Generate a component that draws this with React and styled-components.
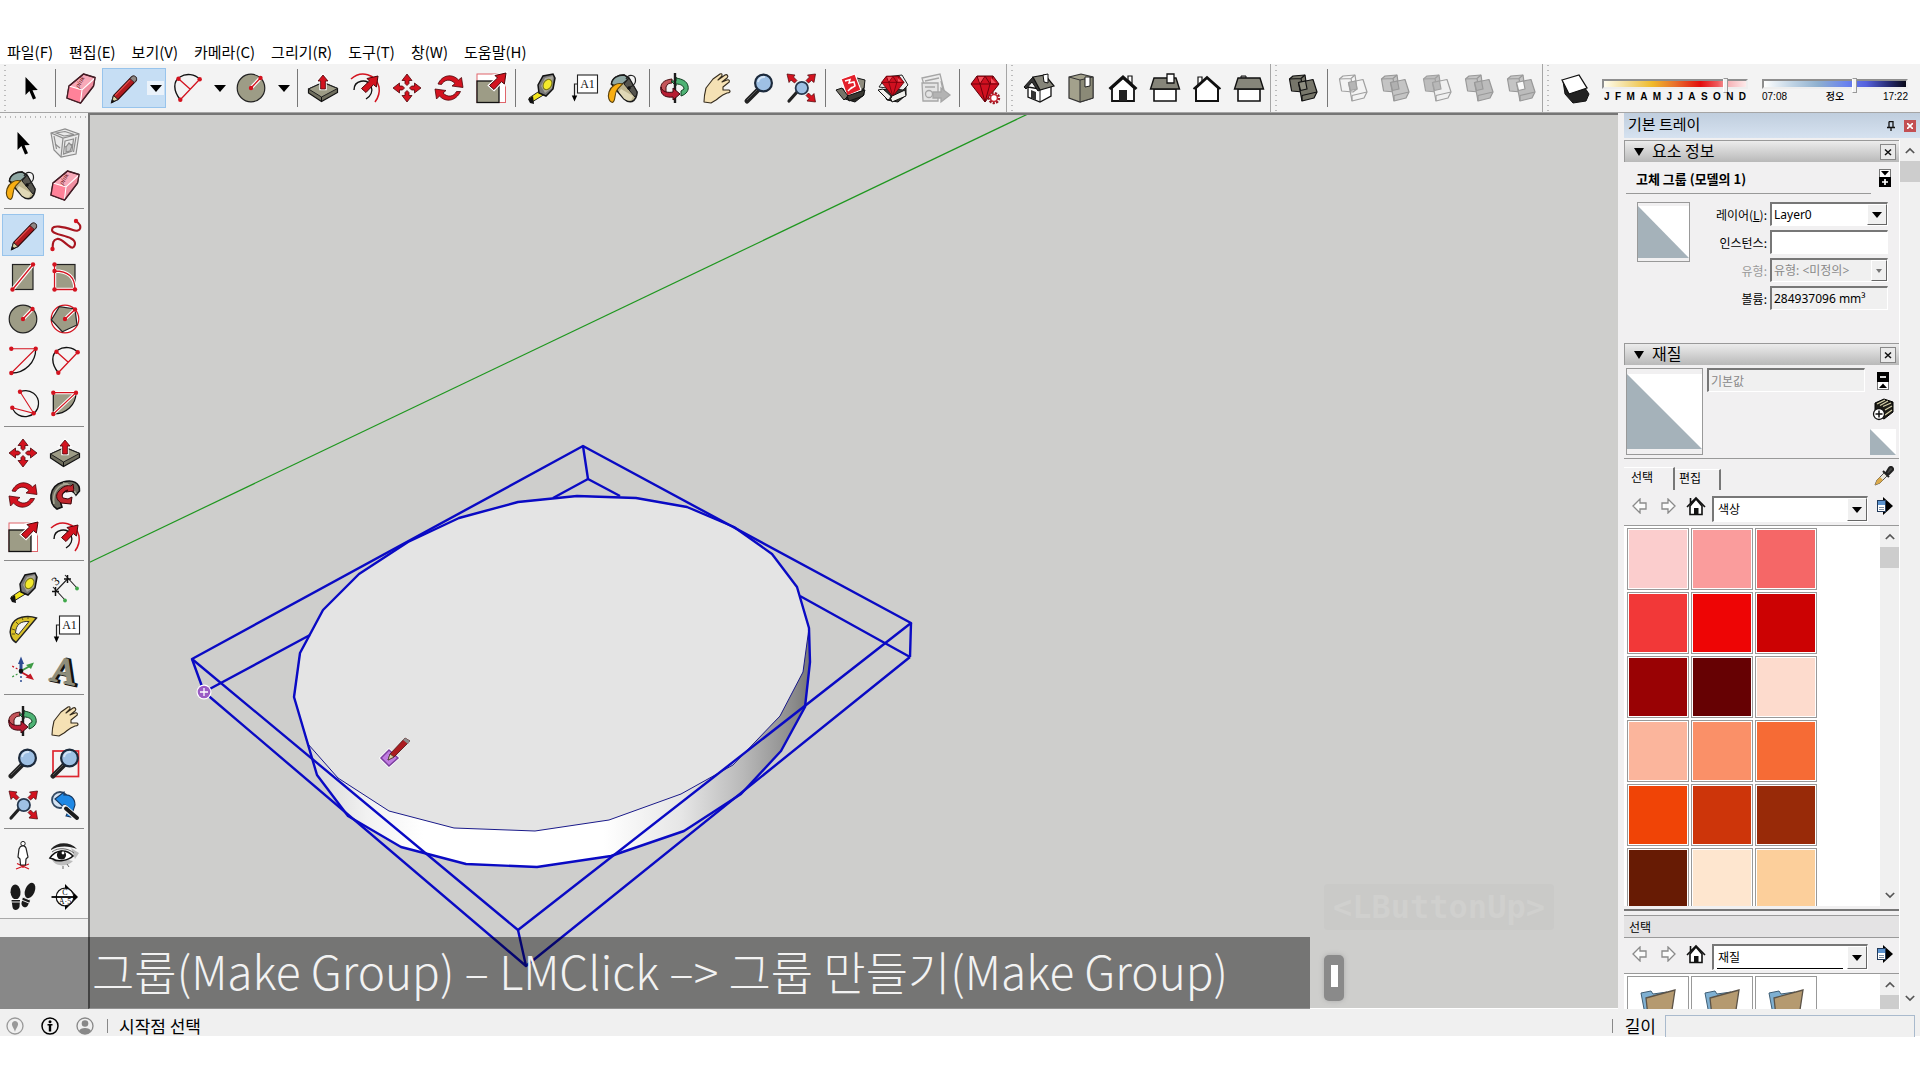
import React, { useState } from 'react';
import styled, { createGlobalStyle, css } from 'styled-components';

const RED = '#d3131f';
const OLIVE = '#9d9c86';
const NAVY = '#0a0ac4';

const dot = (x, y) => <circle key={`${x}-${y}`} cx={x} cy={y} r="2.2" fill={RED} />;

const arrowUp = 'M16 1 L21 7 H18.4 V15 H13.6 V7 H11 Z';
const arrowDiag = 'M30 1 L28.4 12 L25.5 9.6 L18 17.5 L13.5 13.5 L21.5 6 L19 3.5 Z';

const lens = (
  <>
    <path d="M15 18 L4 29" stroke="#222" strokeWidth="5" strokeLinecap="round" />
    <path d="M14 18 L4 28" stroke="#555" strokeWidth="1" />
    <circle cx="20.5" cy="11" r="8.4" fill="#9ec0e4" stroke="#1c2a3c" strokeWidth="2.2" />
    <path d="M15 10 a6 6 0 0 1 7 -5" fill="none" stroke="#d3e4f6" strokeWidth="2" />
  </>
);

const solidShape = (back, front, mid, line) => (
  <g stroke={line} strokeWidth="1.2" strokeLinejoin="round">
    <path d="M2.5 7 L6 4 L18 3 L20 17 L16 20 L4.6 19 Z" fill={back} />
    <path d="M2.5 7 L14 6.5 L18 3 M14 6.5 L15 12" fill="none" />
    <path d="M11.5 10.5 L26 7.5 L30 20 L27 26 L15 29 Z" fill={front} />
    <path d="M15 23.5 L30 20 M15 23.5 L15 29" fill="none" />
    <path d="M11.5 10.5 L18.5 9 L20 17 L13.5 18.5 Z" fill={mid} />
  </g>
);

const house = (
  <>
    <path d="M21 4 h4 v8 l-4 -4 Z" fill="#fff" stroke="#111" strokeWidth="1.2" />
    <path d="M5 16 V29 H27 V16 L16 6 Z" fill="#fff" stroke="#111" strokeWidth="1.8" />
    <path d="M2.5 17 L16 5 L29.5 17" fill="none" stroke="#111" strokeWidth="3" />
  </>
);

const sideHouse = (
  <>
    <path d="M5 17 H27 V29 H5 Z" fill="#fff" stroke="#111" strokeWidth="1.6" />
    <path d="M5 6 H27 L30.5 17 H1.5 Z" fill="#86857a" stroke="#111" strokeWidth="1.4" />
  </>
);

const gem = (
  <>
    <path d="M8 4 H24 L30 12 L16 30 L2 12 Z" fill="#d01020" stroke="#5a0008" strokeWidth="1" />
    <path d="M8 4 L11 12 L16 4 L21 12 L24 4 M2 12 H30 M11 12 L16 30 L21 12" fill="none" stroke="#6e000a" strokeWidth="1" />
    <path d="M9 5 L15 5 L11 11 Z M22 6 L27 11 H22 Z" fill="#f4505a" />
  </>
);

const ICONS = {
  select: <path d="M10.5 5 V23 L14.4 19 L18 27.5 L21 26.2 L17.5 18.2 L22.8 18 Z" fill="#000" />,
  component: (
    <g fill="none" stroke="#8d8d8d" strokeWidth="1.2">
      <path d="M2 6 L16 2 L30 7 L27 27 L12 30 L5 23 Z" fill="#e9e9e9" />
      <path d="M2 6 L14 11 L30 7 M14 11 L12 30 M5 9 L7.5 22 M27 10 L24.5 25 M7 6 L16 4.5 L25 7.5 L15 9 Z" />
      <path d="M16 14 L24.500 12 L23 24 L14.500 27 Z M6 17 L11 21 M16 20 L24 17" />
      <path d="M17 20 L20 16 L23 19 L21 24 L17 25 Z" fill="#c9c9c9" />
    </g>
  ),
  paint: (
    <>
      <path d="M2.5 12 C3 6 9 3 15 3 L20 6 L28 20 C28 25 26 28 23 29.500 C20 30 17 29 15 27 L9 20 Z" fill="#bdb48f" stroke="#1b1b1b" strokeWidth="1.6" />
      <path d="M15 12 L20 6 L28 20 C28 22 27 24 26 25 Z" fill="#55544e" stroke="#1b1b1b" />
      <path d="M12 17 L24 24 L22 28.500 C19 29 17 28 15 26.500 L10 20 Z" fill="#e0d8b6" />
      <path d="M2.5 12 C3 6 9 3 15 3 L19.5 6 C17 10 12 13 7 14.500 Z" fill="#8fa8a4" stroke="#1b1b1b" strokeWidth="1.4" />
      <path d="M17 7 C20 1 27 3 26.500 9 C26.500 12 23 15 20.500 15" fill="none" stroke="#222" strokeWidth="1.2" />
      <circle cx="20" cy="16" r="1.8" fill="#111" />
      <path d="M13.5 12 C8 10 2 14 0 20 C-1.5 25 0 30 3.500 30.500 C7 29 5 22 8 18 C9.500 15.500 12 14 13.5 12 Z" fill="#f8ae12" stroke="#5a420d" strokeWidth="1.1" />
    </>
  ),
  eraser: (
    <>
      <path d="M18.5 2 L30 5.5 L28.5 14 L15.5 31 L2 26 L4 14 Z" fill="#f8a9b8" stroke="#431c25" strokeWidth="1.4" strokeLinejoin="round" />
      <path d="M4 14 L17 18 L15.5 31 L2 26 Z" fill="#ff8299" />
      <path d="M17 18 L30 5.5 L28.5 14 L15.5 31 Z" fill="#ef8ea0" />
      <path d="M4 14 L17 18 L30 6 M17 18 L15.5 30" fill="none" stroke="#fff" strokeWidth="1.1" />
      <path d="M18.5 2 L30 5.5 L28.5 14 L15.5 31 L2 26 L4 14 Z" fill="none" stroke="#431c25" strokeWidth="1.3" strokeLinejoin="round" />
      <text x="12" y="15" fontSize="7" fontStyle="italic" fontFamily="Liberation Serif, serif" fill="#611" transform="rotate(-60 14 14)">pink</text>
    </>
  ),
  pencil: (
    <>
      <path d="M4.5 30.5 L6.5 23.5 L24.5 5 C27 2.5 31 6 29 9 L11 27.5 Z" fill="#b01a1f" stroke="#2b0708" strokeWidth="1.1" />
      <path d="M4.5 30.5 L6.5 23.5 L11 27.5 Z" fill="#d9cf9f" stroke="#222" />
      <path d="M8 23.5 L23 8" stroke="#e24a48" strokeWidth="1.2" />
      <path d="M23 6.5 L27.5 10.5 L29.5 8 C30 4.5 27 3 25 4.6 Z" fill="#8f8784" stroke="#333" strokeWidth=".8" />
      <path d="M4 31.5 L5.5 27.5 L8 29.5 Z" fill="#111" />
    </>
  ),
  freehand: (
    <>
      <path d="M27 2 C34 7 32 14 24 11 C15 8 3 5 3 11 C3 17 27 16 26 25 C24 36 14 18 8 20 C3 21 4 26 3.5 30" fill="none" stroke="#a81620" strokeWidth="2.1" />
      {dot(27, 2)}
      {dot(3.5, 30)}
    </>
  ),
  rect: (
    <>
      <rect x="5.5" y="3.5" width="20.5" height="25" fill={OLIVE} stroke="#222" strokeWidth="1.2" />
      <path d="M5.5 28.5 L26 3.5" stroke="#fff" strokeWidth="3.6" />
      <path d="M5.5 28.5 L26 3.5" stroke={RED} strokeWidth="1.3" />
      {dot(5.5, 28.5)}
      {dot(26, 3.5)}
    </>
  ),
  rotRect: (
    <>
      <rect x="5.5" y="3.5" width="20.5" height="25" fill={OLIVE} stroke="#222" strokeWidth="1.2" />
      <path d="M5.5 3.5 V28.5 H26 C26 16 19 10 5.5 10" fill="none" stroke="#fff" strokeWidth="3.4" />
      <path d="M5.5 3.5 V28.5 H26 C26 16 19 10 5.5 10" fill="none" stroke={RED} strokeWidth="1.3" />
      {[[5.5, 3.5], [5.5, 10], [5.5, 28.5], [26, 28.5]].map(([x, y]) => dot(x, y))}
    </>
  ),
  circle: (
    <>
      <circle cx="16" cy="16" r="13.8" fill={OLIVE} stroke="#222" strokeWidth="1.2" />
      <path d="M16 16 L25.5 6" stroke="#fff" strokeWidth="3.8" />
      <path d="M16 16 L25.5 6" stroke={RED} strokeWidth="1.4" />
      {dot(16, 16)}
      {dot(25.5, 6)}
    </>
  ),
  polygon: (
    <>
      <circle cx="16" cy="16" r="13.8" fill="#fff" stroke={RED} strokeWidth="1.2" />
      <path d="M10.3 3.7 L26 6 L28 22 L13.3 28.7 L2.4 17 Z" fill={OLIVE} stroke="#222" strokeWidth="1.2" />
      <path d="M16 16 L26 6.5" stroke="#fff" strokeWidth="3.6" />
      <path d="M16 16 L26 6.5" stroke={RED} strokeWidth="1.4" />
      {dot(16, 16)}
      {dot(26, 6.5)}
    </>
  ),
  arc: (
    <>
      <path d="M28.7 3.7 A24 24 0 0 1 4.3 28" fill="none" stroke="#111" strokeWidth="1.3" />
      <path d="M4.3 3.7 H28.7 L4.3 28" fill="none" stroke={RED} strokeWidth="1.1" />
      {[[4.3, 3.7], [28.7, 3.7], [4.3, 28]].map(([x, y]) => dot(x, y))}
    </>
  ),
  arc2: (
    <>
      <path d="M9.3 27.7 C2 19 2 9 9 5 C15 1 24 2 28.7 7.3" fill="none" stroke="#111" strokeWidth="1.4" />
      <path d="M7.5 6.7 L19 17 M28.7 7.3 L9.3 27.7" stroke={RED} strokeWidth="1.3" />
      {[[7.5, 6.7], [28.7, 7.3], [9.3, 27.7]].map(([x, y]) => dot(x, y))}
    </>
  ),
  arc3: (
    <>
      <path d="M13 4.7 C24 .5 32 9 31.5 17 C31 31 11 35 5.3 20.7" fill="none" stroke="#111" strokeWidth="1.2" />
      <path d="M13 4.7 L26.7 26.3 L5.3 20.7" fill="none" stroke={RED} strokeWidth="1.1" />
      {[[13, 4.7], [26.7, 26.3], [5.3, 20.7]].map(([x, y]) => dot(x, y))}
    </>
  ),
  pie: (
    <>
      <path d="M4.3 5.7 H27 C27 18 17 27 4.3 27 Z" fill={OLIVE} stroke="#111" strokeWidth="1.2" />
      <path d="M4.3 5.7 H27 L4.3 27" fill="none" stroke="#fff" strokeWidth="3.2" />
      <path d="M4.3 5.7 H27 L4.3 27" fill="none" stroke={RED} strokeWidth="1.2" />
      {[[4.3, 5.7], [27, 5.7], [4.3, 27]].map(([x, y]) => dot(x, y))}
    </>
  ),
  move: (
    <g fill={RED} stroke="#4b0509" strokeWidth=".8">
      {[0, 90, 180, 270].map((a) => (
        <path key={a} transform={`rotate(${a} 16 16)`} d="M16 2 L21 8.5 H18 V11.5 L16 13.5 L14 11.5 V8.5 H11 Z" />
      ))}
    </g>
  ),
  push: (
    <>
      <path d="M1.5 17 L16 10.5 L30.5 16.5 V20.5 L14.5 29.5 L1.5 21 Z" fill="#6f6e5e" stroke="#111" strokeWidth="1.2" />
      <path d="M1.5 17 L16 10.5 L30.5 16.5 L14.5 25 Z" fill={OLIVE} stroke="#222" strokeWidth="1" />
      <path d="M14.5 25 V29" stroke="#111" />
      <path d={arrowUp} transform="translate(0 2)" fill={RED} stroke="#fff" strokeWidth="2.6" />
      <path d={arrowUp} transform="translate(0 2)" fill={RED} stroke="#4b0509" strokeWidth=".8" />
    </>
  ),
  rotate: (
    <g fill={RED} stroke="#4b0509" strokeWidth=".8">
      <path d="M5 12 C9 3 19 1 25.5 8 L28.5 5.5 L30 15.5 L19 14 L22 11.5 C17 6 11 8 8.5 12.5 Z" />
      <path d="M27.5 19.5 C23 29 13 31 6.5 24 L3.5 27 L2 17 L13 18.5 L10 21 C15 26 21 24.5 23.5 19.5 Z" />
    </g>
  ),
  follow: (
    <>
      <path d="M8 30 C-1 25 -1 7 14 3 C24 0 31 4 30.5 12 L27 16 C25 12 20 9 14 14 C11 18 11 24 13 28 Z" fill="#6b6a5e" stroke="#111" strokeWidth="1.6" />
      <path d="M5 25 C3 14 9 5 19 5 M14 4 C20 5 25 9 27 15" fill="none" stroke="#a9a894" strokeWidth="1.6" />
      <path d="M10 12 C14 7 19 6 22 7 L24 5 L25 12 L17 13 L19 11 C14 12 12 16 14 19 L19 20 L23 18 L22 25 L12 24 C6 20 7 15 10 12 Z" fill="#c0262c" stroke="#3d0407" strokeWidth="1" />
    </>
  ),
  scale: (
    <>
      <rect x="2" y="2" width="28.5" height="28.5" fill="#fff" stroke="#e0656b" />
      <rect x="2" y="9" width="22" height="21.5" fill={OLIVE} stroke="#111" strokeWidth="1.3" />
      <path d={arrowDiag} transform="translate(1 0)" fill={RED} stroke="#fff" strokeWidth="3" />
      <path d={arrowDiag} transform="translate(1 0)" fill={RED} stroke="#4b0509" />
    </>
  ),
  offset: (
    <>
      <path d="M2 7 C12 -2 27 2 30 15 C31 21 29 26 26 30" fill="none" stroke={RED} strokeWidth="1.5" />
      <path d="M5 18 C5 8 18 6 22 14 C24 19 22 24 17 27" fill="none" stroke="#111" strokeWidth="1.4" />
      <path d={arrowDiag} transform="translate(-1 3)" fill={RED} stroke="#4b0509" />
    </>
  ),
  tape: (
    <>
      <path d="M4 26 L16 18 L20 22 L7 30 Z" fill="#f2e51c" stroke="#222" />
      <path d="M3 27 L8 24 L9 32 L5 31 Z" fill="#111" />
      <path d="M13 13 L18 4 L28 2 L30 6 L28 17 L21 24 L14 21 Z" fill="#777" stroke="#111" strokeWidth="1.5" />
      <path d="M16 14 L20 6 L28 4 L27 16 L20 21 Z" fill="#aaa79b" />
      <ellipse cx="22.5" cy="12.5" rx="4" ry="5.5" transform="rotate(30 22.5 12.5)" fill="#f4ea2c" stroke="#777413" />
    </>
  ),
  dimension: (
    <>
      <path d="M6.5 20.5 L18.5 8 M4 16 L16 29 M16 4 L28 17" stroke="#222" strokeWidth="1.1" />
      <path d="M3 20.5 H10 M6.5 16 V25 M15 8 H22 M18.5 4 V12" stroke="#111" strokeWidth="1.5" />
      <text x="4" y="13" fontSize="12" fontFamily="Liberation Serif, serif" transform="rotate(-42 8 10)">3</text>
      <circle cx="16" cy="29.5" r="1.9" fill="#3fa84a" />
      <circle cx="28" cy="17.5" r="1.9" fill="#3fa84a" />
    </>
  ),
  protractor: (
    <>
      <path d="M29.5 5 C21 2 7 3 4 14 C2 20 4 27 9 29.5 Z" fill="#d9c128" stroke="#222" strokeWidth="1.4" />
      <path d="M22 8.5 C14 8 9 11 8.5 20 L11.5 21.5 Z" fill="#f4f4f4" stroke="#333" strokeWidth="1" />
      <path d="M5 16 l3 1 M5 21 l3 0 M9 9 l2 2 M15 5 l1 2 M21 4 l0 2" stroke="#5f5512" />
    </>
  ),
  text: (
    <>
      <rect x="10.5" y="3" width="20" height="18" fill="#fff" stroke="#222" strokeWidth="1.1" />
      <text x="20.5" y="16" fontSize="12" textAnchor="middle" fontFamily="Liberation Serif, serif" fill="#111">A1</text>
      <path d="M10 12 H7.5 V25" fill="none" stroke="#222" strokeWidth="1.2" />
      <path d="M4.8 23.5 H10.2 L7.5 29.5 Z" fill="#000" />
    </>
  ),
  axes: (
    <>
      <path d="M14 16 V7" stroke="#2d4c93" strokeWidth="3" />
      <path d="M14 1.5 L17 9 H11 Z" fill="#2d4c93" />
      <path d="M14 16 L23 11" stroke="#3e9b45" strokeWidth="2" />
      <path d="M27 7.5 L24 14 L19 10 Z" fill="#3e9b45" />
      <path d="M14 17 L23 22" stroke="#c31824" strokeWidth="2" />
      <path d="M27 25 L18.5 22.5 L23.5 18.5 Z" fill="#c31824" />
      <path d="M14 17 V27" stroke="#2d4c93" strokeWidth="1.5" strokeDasharray="2 2" />
      <path d="M14 17 L5 22" stroke="#3e9b45" strokeWidth="1.2" strokeDasharray="2 2" />
      <path d="M14 16 L5 11" stroke="#c31824" strokeWidth="1.2" strokeDasharray="2 2" />
      <circle cx="14" cy="16" r="2.3" fill="#111" />
    </>
  ),
  text3d: (
    <g fontFamily="Liberation Serif, serif" fontSize="36" stroke="#111" textAnchor="middle" transform="rotate(12 16 16)">
      <text x="17" y="28" fill="#3c3b34" strokeWidth="3">A</text>
      <text x="15" y="28" fill="#8e8d7b" stroke="#8e8d7b" strokeWidth="1.5">A</text>
    </g>
  ),
  orbit: (
    <>
      <path d="M13 7 C4 8 1 12 2 18 L7 21 V15 C8 12 10 11 13 11 Z" fill="#c4555a" stroke="#4b1014" strokeWidth="1" />
      <path d="M17 5 V9 L12 9 L17 14 V12 C22 12 25 14 25 17 L22 19 V24 C28 22 30 18 29 14 C28 9 23 7 17 6 Z" fill="#4eb274" stroke="#123f22" strokeWidth="1" />
      <path d="M16 1 V31" stroke="#1c1c1c" strokeWidth="2.4" />
      <path d="M2 15 C3 20 9 21 14 20 V16 L21 22 L14 28 V25 C7 26 2 23 2 18 Z" fill="#b81d33" stroke="#3d0810" strokeWidth="1" />
    </>
  ),
  pan: (
    <path d="M3 30 C3 24 4 20 5 16 L12 7 L19 2 C21 1 22 3 20 5 L17 8 L24 3 C26 2 28 4 26 6 L21 10 L26 8 C29 7 29 10 27 11 L22 15 L22 18 L28 18 C30 19 29 21 26 21 C20 23 18 26 15 28 L10 31 Z" fill="#f5e1b4" stroke="#332a1c" strokeWidth="1.1" strokeLinejoin="round" />
  ),
  zoom: lens,
  zoomWindow: (
    <>
      <rect x="4" y="4" width="25.5" height="25.5" fill="none" stroke="#dd2730" strokeWidth="1.7" />
      {lens}
    </>
  ),
  extents: (
    <>
      <path d="M12 20 L4 29" stroke="#222" strokeWidth="3.2" strokeLinecap="round" />
      <circle cx="16.8" cy="16" r="6.2" fill="#9ec0e4" stroke="#26384e" strokeWidth="1.8" />
      <g fill={RED} stroke="#4b0509" strokeWidth=".7">
        <path d="M2 2 L10 3 L8.5 5 L12 8.5 L9.5 11 L6 8 L4 10.5 Z" />
        <path d="M30.5 2 L29 10.5 L26.5 8.5 L23.5 11 L21 8.5 L24.5 5 L22.5 3 Z" />
        <path d="M30.5 30 L22 29 L24 26.5 L21 23.5 L23.5 21 L26.5 24 L29 21.5 Z" />
      </g>
    </>
  ),
  previous: (
    <>
      <circle cx="11" cy="11" r="8" fill="#d4e3f3" stroke="#344a63" strokeWidth="1.8" />
      <path d="M6 10 L15 3 V6 C21 5 26 9 26 16 L22 28 L17 27 C20 23 20 17 15 15.500 V18.500 Z" fill="#1e88e5" stroke="#17375f" strokeWidth="1.1" />
      <path d="M16 19 L28 29" stroke="#f3f3f3" strokeWidth="6" strokeLinecap="round" />
      <path d="M17 19.500 L28 29" stroke="#1b1b1b" strokeWidth="4" strokeLinecap="round" />
    </>
  ),
  person: (
    <>
      <path d="M9 30 L22 25 M10 24.5 L22 30 M16 22 V29" stroke={RED} strokeWidth="1.2" />
      <circle cx="16" cy="4.6" r="2.2" fill="#fff" stroke="#222" />
      <path d="M13.5 7.5 C16 6 18 7 19 9 L21 18 L19 20 L18.5 26 H13.5 L13 20 L11 18 L12 10 Z" fill="#fff" stroke="#222" strokeWidth="1.2" />
    </>
  ),
  eye: (
    <>
      <path d="M3 21 C8 29 20 27 24 22 L15 20 Z M22 9 L30 14 L26 20 Z" fill="#bdbdbd" />
      <path d="M2 10 C8 3 20 2 28 10 C20 6.500 9 6.500 2 11 Z" fill="#222" />
      <path d="M1 19 C7 10 18 10 24 17 C19 22 8 23 4 20 Z" fill="#fff" stroke="#111" strokeWidth="1.6" />
      <circle cx="12.5" cy="16" r="4.6" fill="#151515" />
      <circle cx="14" cy="14" r="1.4" fill="#fff" />
      <path d="M3 13 C9 8 19 9 25 14 M14 27 l0 3 M18 25 l2 3" fill="none" stroke="#666" />
    </>
  ),
  walk: (
    <g fill="#1a1a1a">
      <ellipse cx="8.5" cy="11" rx="5" ry="7.5" transform="rotate(-4 8.5 11)" />
      <path d="M4.5 19 L13 19 L12.5 26 C11 30 6 30 5.5 26 Z" />
      <ellipse cx="23" cy="9.5" rx="4.8" ry="8" transform="rotate(22 23 9.5)" />
      <path d="M16 16 L23.5 19 L20.5 25 C18 28 14 25 14.5 22 Z" />
      <path d="M4 18.5 H13.5 M4.5 21 H13 M15.5 16 L24 19.5 M14.5 19 L22 22" stroke="#fff" strokeWidth=".9" />
    </g>
  ),
  section: (
    <>
      <path d="M16 3 L29 16 L16 29 Z" fill="#000" />
      <circle cx="16" cy="16" r="8.8" fill="#fff" stroke="#111" strokeWidth="1.2" />
      <path d="M2.5 16 H28" stroke="#000" strokeWidth="1.8" />
      <g fontFamily="Liberation Serif, serif" fontSize="8" textAnchor="middle">
        <text x="16" y="14">C</text>
        <text x="16" y="23">A·5</text>
      </g>
    </>
  ),
  warehouse: (
    <>
      <path d="M5 17 L10 27 L20 30 L29 23 V13 L20 17 Z" fill="#282824" stroke="#111" />
      <path d="M22 6 L30 8 L29 16 L26 18 Z" fill="#8f8c7e" stroke="#111" />
      <path d="M6 7 L20 2 L26 18 L12 24 Z" fill="#e3202b" stroke="#fff" strokeWidth="1.2" />
      <path d="M10 9 L15 7.500 L14 11 L19 10 L20 14 L15 17 M13 19 L17 15" fill="none" stroke="#fff" strokeWidth="1.5" />
      <path d="M1 18 L7 16 L13 24 L9 28 Z" fill="#77756a" stroke="#111" />
      <path d="M12 24 L30 18 L28 24 L14 29 Z" fill="#3b3a34" stroke="#111" />
    </>
  ),
  extension: (
    <>
      <path d="M4 18 L10 28 L21 30 L29 23 V14 Z" fill="#3a3935" stroke="#111" />
      <path d="M2 15 L9 5 L25 3 L31 13 L26 18 Z" fill="#eee" stroke="#222" />
      <g transform="translate(3 1) scale(.8 .78)">{gem}</g>
      <path d="M1 18 L6 17 L15 25 L11 28 Z M13 25 L28 18 L29 24 L15 30 Z" fill="#f1f1ee" stroke="#111" />
    </>
  ),
  layout: (
    <g stroke="#a6a6a6" strokeWidth="1.3">
      <path d="M3 6 L21 2 L26 22 L9 27 Z" fill="#ececec" />
      <path d="M3 11 H19 V29 H4 Z" fill="#e4e4e4" />
      <path d="M6 15 H16 M6 9 L20 6 M22 9 L24 18" />
      <circle cx="10" cy="22" r="3.5" fill="none" />
      <path d="M14 20 H22 V16 L31 23 L22 30 V26 H14 Z" fill="#b3b3b3" />
    </g>
  ),
  ruby: (
    <>
      {gem}
      <circle cx="25" cy="26" r="5" fill="#fff" stroke="#9c1520" strokeWidth="2.4" strokeDasharray="2.2 1.2" />
      <circle cx="25" cy="26" r="3.5" fill="none" stroke="#c72532" strokeWidth="1.6" />
    </>
  ),
  iso: (
    <>
      <path d="M5 15 V25 L17 30 L28 24 V13 L17 17 Z" fill="#fff" stroke="#111" strokeWidth="1.3" />
      <path d="M17 17 V30" stroke="#111" />
      <path d="M8 18 L13 20 V28 L8 26 Z" fill="#333" />
      <path d="M1 15 L10 5 L17 18 L15 19 L9 10 L3 17 Z" fill="#333" stroke="#111" />
      <path d="M10 5 L22 3 L31 14 L17 18 Z" fill="#86857a" stroke="#111" strokeWidth="1.2" />
      <path d="M20 3 L25 2 V11 L21 10 Z" fill="#fff" stroke="#111" />
    </>
  ),
  top: (
    <>
      <path d="M4 5 L16 2 L28 5 V26 L15 30 L4 26 Z" fill="#a3a18c" stroke="#333" strokeWidth="1.2" />
      <path d="M15 8 V30 L28 26 V5 Z" fill="#8b8a77" stroke="#333" />
      <path d="M4 5 L15 8" stroke="#333" />
      <path d="M20 5 H25 V14 L20 15 Z" fill="#fff" stroke="#222" />
    </>
  ),
  front: (
    <>
      {house}
      <path d="M12 18 H20 V29 H12 Z" fill="#222" />
    </>
  ),
  right: (
    <>
      {sideHouse}
      <path d="M18 2 H25 V11 H18 Z" fill="#fff" stroke="#111" strokeWidth="1.3" />
    </>
  ),
  back: (
    <>
      <path d="M7 5 h4 v8 h-4 Z" fill="#fff" stroke="#111" strokeWidth="1.2" />
      <path d="M5 16 V29 H27 V16 L16 6 Z" fill="#fff" stroke="#111" strokeWidth="2" />
      <path d="M2.5 17 L16 5 L29.5 17" fill="none" stroke="#111" strokeWidth="2" />
    </>
  ),
  left: (
    <>
      <path d="M8 4 H13 V7 H8 Z" fill="#aaa" stroke="#111" />
      {sideHouse}
    </>
  ),
  shell: solidShape('#77766a', '#77766a', '#8f8e80', '#111'),
  intersect: solidShape('none', 'none', '#b5b5b5', '#a0a0a0'),
  union: solidShape('#c4c4c4', '#c4c4c4', '#b0b0b0', '#989898'),
  subtract: solidShape('#bdbdbd', '#f0f0f0', '#b8b8b8', '#a0a0a0'),
  trim: solidShape('#c4c4c4', '#bcbcbc', '#b3b3b3', '#999'),
  split: solidShape('#c4c4c4', '#bcbcbc', '#fafafa', '#999'),
  shadow: (
    <>
      <path d="M4 9 L6 22 L14 31 L27 29 L30 22 L26 16 Z" fill="#222" stroke="#111" />
      <path d="M3 8 L20 3 L28 16 L10 22 Z" fill="#fff" stroke="#111" strokeWidth="1.3" />
    </>
  ),
};

const MENUS = ['파일(F)', '편집(E)', '보기(V)', '카메라(C)', '그리기(R)', '도구(T)', '창(W)', '도움말(H)'];

const TOOLBAR = [
  'grip', 'select', '|', 'eraser', 'pencil+', 'arc2+', 'circle+', '|',
  'push', 'offset', 'move', 'rotate', 'scale', '|', 'tape', 'text', 'paint', '|',
  'orbit', 'pan', 'zoom', 'extents', '|', 'warehouse', 'extension', 'layout', '|', 'ruby',
  'grip', 'iso', 'top', 'front', 'right', 'back', 'left',
  'grip', 'shell', '|', 'intersect', 'union', 'subtract', 'trim', 'split',
  'grip', 'shadow',
];

const PALETTE = [
  ['select', 'component', 'paint', 'eraser'],
  ['pencil', 'freehand', 'rect', 'rotRect', 'circle', 'polygon', 'arc', 'arc2', 'arc3', 'pie'],
  ['move', 'push', 'rotate', 'follow', 'scale', 'offset'],
  ['tape', 'dimension', 'protractor', 'text', 'axes', 'text3d'],
  ['orbit', 'pan', 'zoom', 'zoomWindow', 'extents', 'previous'],
  ['person', 'eye', 'walk', 'section'],
];

const SWATCHES = [
  '#fbcdcd', '#fa9c9c', '#f56767', '#f23838', '#ee0505', '#cc0203',
  '#990204', '#660103', '#fddbcd', '#fbb59c', '#fa9068', '#f66b35',
  '#f04406', '#cd350a', '#982a08', '#671b04', '#fee6cf', '#fccf9b',
];

const Icon = ({ name }) => (
  <IconSvg viewBox="0 0 32 32" aria-hidden="true">{ICONS[name]}</IconSvg>
);

const Toolbar = () => (
  <ToolbarRow>
    {TOOLBAR.map((item, i) => {
      if (item === 'grip') return <Grip key={i} $first={i === 0} />;
      if (item === '|') return <Divider key={i} />;
      if (item.endsWith('+')) {
        const name = item.slice(0, -1);
        return (
          <Split key={i} $active={name === 'pencil'}>
            <ToolButton aria-label={name}><Icon name={name} /></ToolButton>
            <MoreButton aria-label={`${name} options`} $active={name === 'pencil'}><Triangle $size={6} /></MoreButton>
          </Split>
        );
      }
      return <ToolButton key={i} aria-label={item}><Icon name={item} /></ToolButton>;
    })}
    <SliderBlock>
      <Range
        type="range"
        aria-label="date"
        defaultValue="87"
        $track="linear-gradient(90deg, #fffdf0, #f2d98a 18%, #efba2a 34%, #e8702c 50%, #e30d0d 68%, #ee5a5c 80%, #f6b5b9 88%, #fdeaea)"
      />
      <SliderLabels>{'JFMAMJJASOND'.split('').map((m, i) => <span key={i}>{m}</span>)}</SliderLabels>
    </SliderBlock>
    <SliderBlock>
      <Range
        type="range"
        aria-label="time"
        defaultValue="64"
        $track="linear-gradient(90deg, #fff, #bfd3e4 20%, #8fb0cf 38%, #6a83ee 58%, #5561dd 72%, #262a70 88%, #0a0a18)"
      />
      <SliderLabels $plain><span>07:08</span><span>정오</span><span>17:22</span></SliderLabels>
    </SliderBlock>
  </ToolbarRow>
);

const Palette = () => (
  <Side>
    <PaletteBox>
      <SideGrip />
      {PALETTE.map((group, i) => (
        <PaletteGroup key={i}>
          {group.map((name) => (
            <PaletteButton key={name} aria-label={name} $active={name === 'pencil'}>
              <Icon name={name} />
            </PaletteButton>
          ))}
        </PaletteGroup>
      ))}
    </PaletteBox>
  </Side>
);

const TOP_FACE = '577,496 636,498 687,507 734,527 772,554 797,587 809,628 803,672 780,716 733,765 681,794 609,820 535,831 454,828 389,811 338,778 308,744 294,697 300,653 323,610 359,574 408,542 459,518 518,502';
const BODY = '577,496 636,498 687,507 734,527 772,554 797,587 809,628 810,662 805,707 781,751 741,794 684,831 611,856 537,867 466,864 401,847 348,816 317,775 294,697 300,653 323,610 359,574 408,542 459,518 518,502';

const Scene = () => (
  <SceneSvg viewBox="90 115 1528 894" preserveAspectRatio="xMinYMin slice" aria-hidden="true">
    <defs>
      <linearGradient id="side" gradientUnits="userSpaceOnUse" x1="294" y1="0" x2="810" y2="0">
        <stop offset="0" stopColor="#cfcfcf" />
        <stop offset=".14" stopColor="#f1f1f1" />
        <stop offset=".25" stopColor="#fff" />
        <stop offset=".6" stopColor="#fff" />
        <stop offset=".75" stopColor="#e6e6e6" />
        <stop offset=".87" stopColor="#b9b9b9" />
        <stop offset=".97" stopColor="#8a8a8a" />
        <stop offset="1" stopColor="#777" />
      </linearGradient>
    </defs>
    <path d="M88 563 L1030 113" stroke="#1f971f" strokeWidth="1.2" />
    <polygon points={BODY} fill="url(#side)" />
    <polygon points={TOP_FACE} fill="#e4e4e4" stroke="#1a1a8a" strokeWidth="1" />
    <g fill="none" stroke={NAVY} strokeWidth="2.4" strokeLinejoin="round">
      <polygon points={BODY} />
      <path d="M583 446 L911 623 L518 930 L192 659 Z" />
      <path d="M583 446 L588 479 M911 623 L910 657 M518 930 L526 966 M192 659 L204 692" />
      <path d="M204 692 L526 966 L910 657" />
      <path d="M553 498 L588 479 L620 496 M310 635 L204 692 M800 596 L910 657" />
    </g>
    <circle cx="204" cy="692" r="7.5" fill="#fff" />
    <circle cx="204" cy="692" r="6.3" fill="#9a5cc4" />
    <path d="M204 688 V696 M200 692 H208" stroke="#fff" strokeWidth="1.3" />
    <path d="M389 750 L398 758 L389 766 L381 758 Z" fill="#c07ce0" stroke="#fff" strokeWidth="3" />
    <path d="M389 750 L398 758 L389 766 L381 758 Z" fill="#c07ce0" stroke="#7b3f9e" strokeWidth="1.5" />
    <path d="M388 760 L390 754 L405 738 L410 741 L394 757 Z" fill="#ab1c20" stroke="#4a1212" strokeWidth=".8" />
    <path d="M388 760 L390 754 L394 757 Z" fill="#d9cf9f" stroke="#333" strokeWidth=".6" />
    <path d="M405 738 L410 741 L408 744 L403 740 Z" fill="#8d8d8d" />
  </SceneSvg>
);

const Chevron = ({ up }) => (
  <ChevronSvg viewBox="0 0 12 8" aria-hidden="true">
    <path d={up ? 'M1 7 L6 2 L11 7' : 'M1 1 L6 6 L11 1'} fill="none" stroke="#555" strokeWidth="2" />
  </ChevronSvg>
);

const ScrollBar = ({ width, down = true, thumb = 21 }) => (
  <ScrollTrack $width={width}>
    <ScrollArrow aria-label="up"><Chevron up /></ScrollArrow>
    <ScrollThumb $height={thumb} />
    <Spacer />
    {down && <ScrollArrow aria-label="down"><Chevron /></ScrollArrow>}
  </ScrollTrack>
);

const Header = ({ title }) => (
  <SectionHeader>
    <Triangle $size={5} $tall />
    <SectionTitle>{title}</SectionTitle>
    <CloseButton aria-label="close">
      <svg width="8" height="8" viewBox="0 0 8 8"><path d="M1 1.500 L7 7 M7 1.500 L1 7" stroke="#111" strokeWidth="1.5" /></svg>
    </CloseButton>
  </SectionHeader>
);

const Combo = ({ id, label, value, disabled, underline }) => (
  <ComboFrame $disabled={disabled}>
    <ComboSelect id={id} aria-label={label} disabled={disabled} $underline={underline}>
      <option>{value}</option>
    </ComboSelect>
    <ComboArrow $disabled={disabled}><Triangle $size={disabled ? 3 : 5} $color={disabled ? '#777' : '#000'} /></ComboArrow>
  </ComboFrame>
);

const Preview = ({ size }) => (
  <PreviewBox $size={size}>
    <svg width="100%" height="100%" viewBox="0 0 10 10" preserveAspectRatio="none">
      <rect width="10" height="10" fill="#fff" />
      <path d="M0 0 L10 10 H0 Z" fill="#a5b2ba" />
    </svg>
  </PreviewBox>
);

const NavRow = ({ label, value, underline }) => (
  <Nav>
    <NavButton aria-label="back">
      <svg width="16" height="16" viewBox="0 0 16 16"><path d="M1 8 L8 1 V5 H14 V11 H8 V15 Z" fill="#fbfbfb" stroke="#8a8a8a" strokeWidth="1.3" /></svg>
    </NavButton>
    <NavButton aria-label="forward">
      <svg width="16" height="16" viewBox="0 0 16 16"><path d="M15 8 L8 1 V5 H2 V11 H8 V15 Z" fill="#fbfbfb" stroke="#8a8a8a" strokeWidth="1.3" /></svg>
    </NavButton>
    <NavButton aria-label="home">
      <svg width="20" height="20" viewBox="0 0 20 20">
        <path d="M4 10 V18.5 H16 V10 L10 3 Z" fill="#fff" stroke="#111" strokeWidth="1.6" />
        <path d="M1 11 L10 2 L19 11 M4.500 7 V2" fill="none" stroke="#111" strokeWidth="1.6" />
        <path d="M8 12 H12.500 V19 H8 Z" fill="#111" />
      </svg>
    </NavButton>
    <Combo label={label} value={value} underline={underline} />
    <NavButton aria-label="details">
      <svg width="18" height="18" viewBox="0 0 18 18">
        <path d="M7 0 L17 9 L7 18 Z" fill="#000" />
        <rect x="1.500" y="3.500" width="8" height="11" fill="#fff" stroke="#223a5a" />
        <path d="M2 4 H9 V8 H2 Z" fill="#5b93cf" />
        <path d="M3 10.500 H8 M3 12.500 H8" stroke="#7d8fa5" />
      </svg>
    </NavButton>
  </Nav>
);

const Folder = () => (
  <svg width="38" height="36" viewBox="0 0 38 36" aria-hidden="true">
    <path d="M2 4 L12 2 L14 5 L28 3 L25 34 L8 36 Z" fill="#7fb0d2" stroke="#3f5e75" />
    <path d="M7 9 L36 1 L31 34 L10 36 Z" fill="#b59a70" stroke="#5c5347" strokeWidth="1.3" />
  </svg>
);

const EntityInfo = () => (
  <section>
    <Header title="요소 정보" />
    <EntityTitle>
      <b>고체 그룹 (모델의 1)</b>
      <StackIcon />
    </EntityTitle>
    <EntityBody>
      <Preview size="small" />
      <Fields>
        <FieldLabel htmlFor="layer">레이어(<u>L</u>):</FieldLabel>
        <Combo id="layer" value="Layer0" />
        <FieldLabel htmlFor="instance">인스턴스:</FieldLabel>
        <Field id="instance" />
        <FieldLabel htmlFor="kind" $disabled>유형:</FieldLabel>
        <Combo id="kind" value="유형: <미정의>" disabled />
        <FieldLabel htmlFor="volume">볼륨:</FieldLabel>
        <Field id="volume" readOnly value="284937096 mm³" />
      </Fields>
    </EntityBody>
  </section>
);

const StackIcon = ({ flip }) => (
  <StackSvg viewBox="0 0 12 18" aria-hidden="true">
    <g transform={flip ? 'rotate(180 6 9)' : undefined}>
      <rect x=".5" y=".5" width="11" height="17" fill="#fff" stroke="#777" />
      <path d="M2 2 H10 L6 6.500 Z" fill="#000" />
      <rect y="8" width="12" height="10" fill="#000" />
      <path d={flip ? 'M3 13 H9' : 'M3 13 H9 M6 10 V16'} stroke="#fff" strokeWidth="1.7" />
    </g>
  </StackSvg>
);

const Materials = () => {
  const [tab, setTab] = useState('선택');
  return (
    <MaterialSection>
      <Header title="재질" />
      <MaterialTop>
        <Preview size="large" />
        <Field aria-label="name" disabled value="기본값" readOnly />
        <MaterialTools>
          <StackIcon flip />
          <svg width="22" height="23" viewBox="0 0 22 23" aria-hidden="true">
            <path d="M3 5 L12 1 L21 4 V14 L12 21 L3 17 Z" fill="#1d1c17" stroke="#000" />
            <path d="M5 6 L13 2 M8 7.500 L16 3 M11 8.500 L19 5 M13 12 L20 8 M13 17 L20 12" stroke="#d6d0a8" strokeWidth="1.2" />
            <circle cx="7" cy="16" r="5.500" fill="#fff" stroke="#111" strokeWidth="1.3" />
            <path d="M3.500 16 H10.500 M7 12.500 V19.500" stroke="#111" strokeWidth="1.5" />
          </svg>
          <svg width="26" height="26" viewBox="0 0 26 26" aria-hidden="true">
            <rect width="26" height="26" fill="#fff" />
            <path d="M0 0 L26 26 H0 Z" fill="#a5b2ba" />
          </svg>
        </MaterialTools>
      </MaterialTop>
      <Tabs role="tablist">
        {['선택', '편집'].map((name) => (
          <Tab key={name} role="tab" aria-selected={tab === name} $active={tab === name} onClick={() => setTab(name)}>
            {name}
          </Tab>
        ))}
        <Spacer />
        <NavButton aria-label="sample">
          <svg width="20" height="20" viewBox="0 0 20 20">
            <path d="M1 19 L3 14 L11 6 L14 9 L6 17 Z" fill="#e9e6dc" stroke="#555" />
            <path d="M1 19 L3 14 L6 11 L9 14 L6 17 Z" fill="#dba94a" />
            <path d="M9 5 L15 11 M12 7 L15 2 C17 -1 21 3 18 5 L14 9 Z" fill="#444" stroke="#222" strokeWidth="2" />
          </svg>
        </NavButton>
      </Tabs>
      <NavRow label="collection" value="색상" />
      <ListArea $grow>
        <Cells>
          {SWATCHES.map((color) => <Swatch key={color} aria-label={color} $color={color} />)}
        </Cells>
        <ScrollBar width={20} />
      </ListArea>
      <Splitter />
      <StripLabel>선택</StripLabel>
      <NavRow label="library" value="재질" underline />
      <ListArea>
        <Cells>
          {[0, 1, 2].map((i) => <FolderCell key={i} aria-label="folder"><Folder /></FolderCell>)}
        </Cells>
        <ScrollBar width={20} down={false} />
      </ListArea>
    </MaterialSection>
  );
};

const Tray = () => (
  <TrayBox>
    <TrayTitle>
      <span>기본 트레이</span>
      <Spacer />
      <PinButton aria-label="pin">
        <svg width="8" height="10" viewBox="0 0 8 10"><path d="M2 .5 H6 V6 M2 .5 V6 M0 6.500 H8 M4 6 V10" fill="none" stroke="#111" strokeWidth="1.3" /></svg>
      </PinButton>
      <TrayClose aria-label="close">
        <svg width="6" height="6" viewBox="0 0 6 6"><path d="M0 0 L6 6 M6 0 L0 6" stroke="#fff" strokeWidth="1.6" /></svg>
      </TrayClose>
    </TrayTitle>
    <TrayContent>
      <TraySections>
        <EntityInfo />
        <Materials />
      </TraySections>
      <ScrollBar width={21} />
    </TrayContent>
  </TrayBox>
);

const StatusBar = () => (
  <Status>
    <StatusIcon viewBox="0 0 18 18">
      <circle cx="9" cy="9" r="8" fill="none" stroke="#999" strokeWidth="1.3" />
      <path d="M9 15 C8 11 5.500 9 6 6.500 C6.500 3 11.500 3 12 6.500 C12.500 9 10 11 9 15 Z" fill="#999" />
    </StatusIcon>
    <StatusIcon viewBox="0 0 18 18">
      <circle cx="9" cy="9" r="8" fill="none" stroke="#000" strokeWidth="1.5" />
      <circle cx="9" cy="4.800" r="1.500" />
      <path d="M6.500 7 H11.500 V8.500 H10.200 V14.500 H7.800 V8.500 H6.500 Z" />
    </StatusIcon>
    <StatusIcon viewBox="0 0 18 18">
      <circle cx="9" cy="9" r="8" fill="none" stroke="#888" strokeWidth="1.3" />
      <circle cx="9" cy="6.500" r="3.300" fill="#888" />
      <path d="M3 14 C4 10 14 10 15 14 C12 18 6 18 3 14 Z" fill="#888" />
    </StatusIcon>
    <StatusText>시작점 선택</StatusText>
    <Spacer />
    <Measure htmlFor="length">길이</Measure>
    <MeasureInput id="length" />
  </Status>
);

const App = () => (
  <>
    <GlobalStyle />
    <Page>
      <MenuBar>
        {MENUS.map((m) => <MenuItem key={m}>{m}</MenuItem>)}
      </MenuBar>
      <Toolbar />
      <Main>
        <Palette />
        <Viewport><Scene /></Viewport>
        <Tray />
        <Caption>그룹(Make Group) – LMClick –&gt; 그룹 만들기(Make Group)</Caption>
        <KeyHud>
          <GhostKey>&lt;LButtonUp&gt;</GhostKey>
          <MouseKey><MouseMark /></MouseKey>
        </KeyHud>
      </Main>
      <StatusBar />
    </Page>
  </>
);

const GlobalStyle = createGlobalStyle`
  * { box-sizing: border-box; }
  body {
    margin: 0;
    background: #fff;
    color: #000;
    font-family: "Noto Sans CJK KR", "Liberation Sans", sans-serif;
  }
  button, input, select { font-family: inherit; color: inherit; margin: 0; }
  button { padding: 0; border: 0; background: none; }
  svg { display: block; }
`;

const Page = styled.div`
  display: flex;
  flex-direction: column;
  height: 100vh;
  padding: 40px 0 44px;
  overflow: hidden;
`;

const MenuBar = styled.nav`
  display: flex;
  align-items: center;
  gap: 16px;
  height: 24px;
  flex: none;
  padding-left: 7px;
`;

const MenuItem = styled.button`
  font-size: 15px;
  line-height: 24px;
  white-space: nowrap;
`;

const ToolbarRow = styled.div`
  display: flex;
  align-items: center;
  height: 49px;
  flex: none;
  background: #f3f3f3;
  border-bottom: 1px solid #a5a5a5;
`;

const IconSvg = styled.svg`
  width: 32px;
  height: 32px;
  overflow: visible;
`;

const ToolButton = styled.button`
  display: flex;
  align-items: center;
  justify-content: center;
  width: 42px;
  height: 40px;
  flex: none;
`;

const activeTool = css`
  background: #c6def4;
  outline: 1px solid #98c4ec;
  outline-offset: -1px;
`;

const Split = styled.div`
  display: flex;
  align-items: center;
  width: 64px;
  flex: none;
  ${({ $active }) => $active && activeTool}
`;

const MoreButton = styled.button`
  display: flex;
  align-items: center;
  justify-content: center;
  width: 17px;
  height: 14px;
  margin-left: 3px;
  background: ${({ $active }) => ($active ? '#eaf2fa' : 'none')};
`;

const Triangle = styled.i`
  width: 0;
  height: 0;
  flex: none;
  border: ${({ $size }) => $size}px solid transparent;
  border-top: ${({ $size, $tall }) => $size + ($tall ? 3 : 1)}px solid ${({ $color }) => $color || '#000'};
  border-bottom: 0;
`;

const Divider = styled.div`
  width: 8px;
  height: 38px;
  flex: none;
  background: linear-gradient(#777, #777) 3px 0 / 1px 100% no-repeat;
`;

const Grip = styled.div`
  width: ${({ $first }) => ($first ? 10 : 12)}px;
  height: 48px;
  flex: none;
  border-left: ${({ $first }) => ($first ? 0 : '1px solid #a5a5a5')};
  background: radial-gradient(circle, #bbb 1px, transparent 1px) 3px 4px / 4px 5px repeat-y;
`;

const SliderBlock = styled.div`
  display: flex;
  flex-direction: column;
  flex: 0 1 146px;
  min-width: 0;
  margin: 4px 6px 0 6px;

  & + & { margin-left: 8px; }
`;

const Range = styled.input`
  appearance: none;
  width: 100%;
  height: 14px;
  margin: 0;
  background: none;

  &::-webkit-slider-runnable-track {
    height: 10px;
    border: 2px solid #8e8e8e;
    border-right-color: #eee;
    border-bottom-color: #eee;
    background: ${({ $track }) => $track};
  }

  &::-webkit-slider-thumb {
    appearance: none;
    width: 5px;
    height: 15px;
    margin-top: -3px;
    background: #f3f3f3;
    border: 1px solid #999;
    border-left-color: #fff;
  }
`;

const SliderLabels = styled.div`
  display: flex;
  justify-content: space-between;
  padding: 0 ${({ $plain }) => ($plain ? 0 : 2)}px;
  font: ${({ $plain }) => ($plain ? 500 : 700)} 10px/12px "Liberation Sans", "Noto Sans CJK KR", sans-serif;
`;

const Main = styled.main`
  position: relative;
  display: flex;
  flex: 1;
  min-height: 0;
`;

const Side = styled.aside`
  width: 88px;
  flex: none;
  background: #f0f0f0;
`;

const PaletteBox = styled.div`
  background: #f4f4f4;
  border-bottom: 1px solid #a9a9a9;
`;

const SideGrip = styled.div`
  height: 9px;
  background: radial-gradient(circle, #bbb 1px, transparent 1px) 3px 2px / 5px 4px repeat-x;
`;

const PaletteGroup = styled.div`
  display: grid;
  grid-template-columns: 42px 42px;
  padding-left: 2px;

  & + & {
    margin-top: 2px;
    padding-top: 6px;
    background: linear-gradient(#8a8a8a, #8a8a8a) 4px 0 / 80px 1px no-repeat;
  }
`;

const PaletteButton = styled.button`
  display: flex;
  align-items: center;
  justify-content: center;
  height: 42px;
  ${({ $active }) => $active && activeTool}
`;

const Viewport = styled.div`
  flex: 1;
  min-width: 0;
  overflow: hidden;
  background: #cececc;
  border-top: 2px solid #757575;
  border-left: 2px solid #757575;
  border-bottom: 1px solid #fff;
`;

const SceneSvg = styled.svg`
  width: 100%;
  height: 100%;
`;

const TrayBox = styled.aside`
  display: flex;
  flex-direction: column;
  width: 302px;
  flex: none;
  padding-left: 6px;
  background: #f1f0f1;
  font-size: 12px;
`;

const TrayTitle = styled.header`
  display: flex;
  align-items: center;
  height: 25px;
  flex: none;
  padding: 0 4px 0 4px;
  background: linear-gradient(#c0cede, #d6e2f0);
  font-size: 15px;
  line-height: 18px;

  span:first-child { padding-bottom: 3px; }
`;

const PinButton = styled.button`
  margin-right: 9px;
`;

const TrayClose = styled.button`
  display: flex;
  align-items: center;
  justify-content: center;
  width: 12px;
  height: 12px;
  background: #c34f52;
`;

const Spacer = styled.span`
  flex: 1;
`;

const TrayContent = styled.div`
  display: flex;
  flex: 1;
  min-height: 0;
  padding-top: 2px;
`;

const TraySections = styled.div`
  display: flex;
  flex-direction: column;
  flex: 1;
  min-width: 0;
`;

const SectionHeader = styled.header`
  display: flex;
  align-items: center;
  gap: 8px;
  height: 22px;
  flex: none;
  padding: 0 3px 0 9px;
  border-top: 1px solid #999;
  border-left: 1px solid #999;
  background: linear-gradient(#ececec, #b9b9b9);
`;

const SectionTitle = styled.h2`
  flex: 1;
  margin: 0;
  padding-bottom: 3px;
  font-size: 16px;
  line-height: 18px;
  font-weight: 400;
`;

const CloseButton = styled.button`
  display: flex;
  align-items: center;
  justify-content: center;
  width: 16px;
  height: 16px;
  border: 1px solid #888;
  background: #eaeaea;
`;

const EntityTitle = styled.div`
  display: flex;
  align-items: center;
  justify-content: space-between;
  height: 32px;
  padding: 0 8px 0 12px;
  font-size: 13px;
  background: linear-gradient(#999, #999) 2px 100% / calc(100% - 30px) 1px no-repeat;
`;

const StackSvg = styled.svg`
  width: 12px;
  height: 18px;
`;

const EntityBody = styled.div`
  display: flex;
  justify-content: space-between;
  align-items: flex-start;
  height: 149px;
  padding: 8px 11px 0 13px;
`;

const PreviewBox = styled.div`
  flex: none;
  width: ${({ $size }) => ($size === 'small' ? 53 : 77)}px;
  height: ${({ $size }) => ($size === 'small' ? 60 : 87)}px;
  padding: ${({ $size }) => ($size === 'small' ? 3 : 5)}px 0;
  border: 1px solid #999;
`;

const Fields = styled.div`
  display: grid;
  grid-template-columns: auto 118px;
  align-items: center;
  gap: 4px 3px;
`;

const FieldLabel = styled.label`
  text-align: right;
  color: ${({ $disabled }) => ($disabled ? '#999' : '#000')};
`;

const sunken = css`
  border: 1px solid #fff;
  border-top: 2px solid #777;
  border-left: 2px solid #777;
`;

const Field = styled.input`
  width: 100%;
  height: 24px;
  padding: 0 2px;
  font: 12px "Noto Sans", "Noto Sans CJK KR", sans-serif;
  background: ${({ readOnly }) => (readOnly ? '#f0f0f0' : '#fff')};
  ${sunken}

  &:disabled { color: #888; }
`;

const ComboFrame = styled.div`
  display: flex;
  flex: 1;
  min-width: 0;
  height: 24px;
  background: ${({ $disabled }) => ($disabled ? '#f0f0f0' : '#fff')};
  ${sunken}
`;

const ComboSelect = styled.select`
  appearance: none;
  flex: 1;
  min-width: 0;
  margin-right: 4px;
  padding: 0 2px;
  border: 0;
  outline: 0;
  background: ${({ $underline }) =>
    $underline ? 'linear-gradient(#000, #000) 3px 100% / 100% 1px no-repeat' : 'none'};
  font: 12px "Noto Sans", "Noto Sans CJK KR", sans-serif;

  &:disabled { color: #888; opacity: 1; }
`;

const ComboArrow = styled.span`
  display: flex;
  align-items: center;
  justify-content: center;
  width: ${({ $disabled }) => ($disabled ? 16 : 20)}px;
  flex: none;
  background: #f0f0f0;
  border: 1px solid #fff;
  border-right-color: #666;
  border-bottom-color: #666;
`;

const MaterialSection = styled.section`
  display: flex;
  flex-direction: column;
  flex: 1;
  min-height: 0;
`;

const MaterialTop = styled.div`
  display: flex;
  gap: 4px;
  height: 94px;
  flex: none;
  padding: 3px 2px 0;
  border-bottom: 1px solid #999;

  ${Field} { width: auto; flex: 1; min-width: 0; }
`;

const MaterialTools = styled.div`
  display: flex;
  flex-direction: column;
  align-items: center;
  justify-content: space-between;
  width: 28px;
  flex: none;
  padding: 4px 0 3px;
`;

const Tabs = styled.div`
  display: flex;
  align-items: flex-end;
  height: 31px;
  flex: none;

  ${() => NavButton} { margin: 0 5px 4px 0; }
`;

const Tab = styled.button`
  width: ${({ $active }) => ($active ? 51 : 46)}px;
  height: ${({ $active }) => ($active ? 23 : 21)}px;
  padding: 0 ${({ $active }) => ($active ? 7 : 4)}px 4px;
  border-top: 1px solid #fff;
  border-right: 2px solid #777;
  font-size: 12px;
  line-height: 16px;
  text-align: left;
`;

const Nav = styled.div`
  display: flex;
  align-items: center;
  height: 36px;
  flex: none;
  padding: 0 4px 3px 6px;
  border-bottom: 1px solid #999;
  background: #f1f0f1;

  ${ComboFrame} { height: 26px; margin: 6px 7px 0 6px; }
  ${ComboSelect} { padding-left: 4px; }
`;

const NavButton = styled.button`
  display: flex;
  align-items: center;
  justify-content: center;
  width: 20px;
  height: 20px;
  flex: none;

  ${Nav} & + & { margin-left: 8px; }
`;

const ListArea = styled.div`
  display: flex;
  background: #fff;
  overflow: hidden;
  ${({ $grow }) => ($grow ? css`flex: 1; min-height: 0;` : css`flex: none; height: 35px;`)}
`;

const Cells = styled.div`
  display: grid;
  grid-template-columns: repeat(3, 62px);
  grid-auto-rows: 62px;
  gap: 2px;
  flex: 1;
  padding: 2px 3px;
`;

const Swatch = styled.button`
  border: 1px solid #999;
  padding: 1px;
  background: ${({ $color }) => $color} content-box;
`;

const FolderCell = styled.button`
  display: flex;
  justify-content: center;
  padding-top: 12px;
  border: 1px solid #999;
`;

const Splitter = styled.div`
  height: 10px;
  flex: none;
  background: linear-gradient(#777, #777) 0 3px / 100% 2px no-repeat;
  border-bottom: 1px solid #999;
`;

const StripLabel = styled.div`
  height: 22px;
  flex: none;
  padding-left: 5px;
  border-bottom: 1px solid #999;
  background: #e4e3e4;
  line-height: 21px;
`;

const ScrollTrack = styled.div`
  display: flex;
  flex-direction: column;
  width: ${({ $width }) => $width}px;
  flex: none;
  background: #f0f0f0;
  border-left: 1px solid #fff;
`;

const ScrollArrow = styled.button`
  display: flex;
  align-items: center;
  justify-content: center;
  height: 21px;
  flex: none;
`;

const ScrollThumb = styled.div`
  height: ${({ $height }) => $height}px;
  background: #cdcdcd;
`;

const ChevronSvg = styled.svg`
  width: 10px;
  height: 7px;
`;

const Caption = styled.div`
  position: absolute;
  left: 0;
  bottom: 0;
  width: 1310px;
  max-width: 80%;
  height: 72px;
  padding-left: 92px;
  background: rgba(0, 0, 0, 0.43);
  color: #f2f2f2;
  font-size: 46px;
  font-weight: 300;
  line-height: 66px;
  white-space: nowrap;
`;

const KeyHud = styled.div`
  position: absolute;
  left: 1324px;
  bottom: 8px;
  display: flex;
  flex-direction: column;
  align-items: flex-start;
  gap: 25px;
`;

const GhostKey = styled.span`
  padding: 0 9px;
  border-radius: 4px;
  background: #cacac8;
  color: #d0d0ce;
  font: bold 32px/46px "DejaVu Sans Mono", monospace;
`;

const MouseKey = styled.span`
  display: flex;
  justify-content: center;
  width: 20px;
  height: 46px;
  padding-top: 10px;
  border-radius: 5px;
  background: #8a8a8a;
  box-shadow: 0 0 5px #aaa;
`;

const MouseMark = styled.i`
  width: 7px;
  height: 22px;
  background: #fff;
`;

const Status = styled.footer`
  display: flex;
  align-items: center;
  gap: 17px;
  height: 27px;
  flex: none;
  padding: 6px 5px 0 6px;
  background: #f0f0f0;
  font-size: 17px;
`;

const StatusIcon = styled.svg`
  width: 18px;
  height: 18px;
`;

const StatusText = styled.span`
  padding-left: 11px;
  margin-left: -4px;
  border-left: 1px solid #888;
  line-height: 14px;
`;

const Measure = styled.label`
  padding-left: 12px;
  border-left: 1px solid #888;
  line-height: 14px;
`;

const MeasureInput = styled.input`
  width: 250px;
  height: 22px;
  margin-left: -8px;
  border: 1px solid #a9bacd;
  border-bottom: 0;
  background: #f0f0f0;
`;

export default App;
